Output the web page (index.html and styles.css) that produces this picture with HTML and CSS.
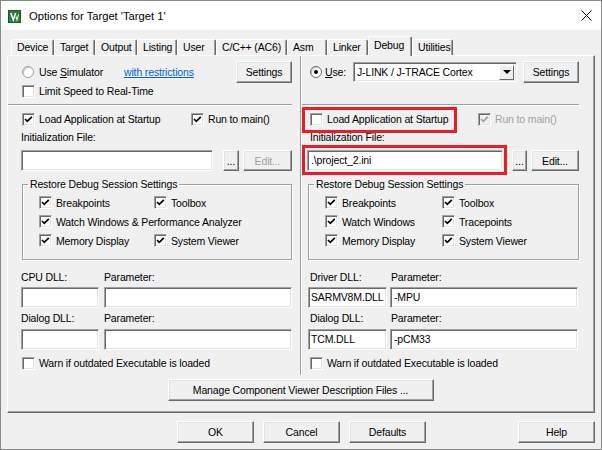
FILE: index.html
```html
<!DOCTYPE html>
<html lang="en">

<head>
    <meta charset="UTF-8">
    <title>Options for Target 'Target 1'</title>
    <link rel="stylesheet" href="styles.css">
</head>

<body>
    <div class="window">
        <div class="titlebar">
            <svg class="app-icon" width="13" height="13" viewBox="0 0 13 13">
                <rect x="0.5" y="0.5" width="12" height="12" fill="#2e7d3b" stroke="#1b5a27" />
                <path d="M2.8 3 L5.3 10 L7.6 3" stroke="#fff" stroke-width="1.5" fill="none" />
                <path d="M8 6.5 L9 10 L10.6 4.5" stroke="#d8efd2" stroke-width="1.1" fill="none" />
            </svg>
            <span class="title">Options for Target 'Target 1'</span>
            <svg class="close" width="11" height="11" viewBox="0 0 11 11">
                <path d="M0.5 0.5 L10.5 10.5 M10.5 0.5 L0.5 10.5" stroke="#000" stroke-width="1" />
            </svg>
        </div>

        <div class="tabs">
            <div class="tab t-device">Device</div>
            <div class="tab t-target">Target</div>
            <div class="tab t-output">Output</div>
            <div class="tab t-listing">Listing</div>
            <div class="tab t-user">User</div>
            <div class="tab t-cc">C/C++ (AC6)</div>
            <div class="tab t-asm">Asm</div>
            <div class="tab t-linker">Linker</div>
            <div class="tab t-debug active">Debug</div>
            <div class="tab t-util">Utilities</div>
        </div>

        <div class="panel">
            <div class="columns">
                <!-- simulator side -->
                <div class="col col-left">
                    <div class="row row-top">
                        <span class="opt sim-opt"><span class="radio"></span><span>Use <u>S</u>imulator</span></span>
                        <a class="link" href="#">with restrictions</a>
                        <button class="btn settings-btn">Settings</button>
                    </div>
                    <div class="row">
                        <span class="opt"><span class="box"></span>Limit Speed to Real-Time</span>
                    </div>
                    <div class="sep"></div>
                    <div class="row load-row">
                        <span class="opt load-opt"><span class="box"><svg width="11" height="11" viewBox="0 0 11 11"><path d="M2 5 L4.3 7.4 L8.8 2.8" stroke="#000" stroke-width="1.7" fill="none" /></svg></span>Load Application at Startup</span>
                        <span class="opt"><span class="box"><svg width="11" height="11" viewBox="0 0 11 11"><path d="M2 5 L4.3 7.4 L8.8 2.8" stroke="#000" stroke-width="1.7" fill="none" /></svg></span>Run to main()</span>
                    </div>
                    <div class="lbl">Initialization File:</div>
                    <div class="file-row">
                        <div class="field init-field"></div>
                        <button class="btn dots-btn">...</button>
                        <button class="btn edit-btn disabled">Edit...</button>
                    </div>
                    <fieldset class="group">
                        <legend>Restore Debug Session Settings</legend>
                        <div class="grp-row">
                            <span class="opt c1"><span class="box"><svg width="11" height="11" viewBox="0 0 11 11"><path d="M2 5 L4.3 7.4 L8.8 2.8" stroke="#000" stroke-width="1.7" fill="none" /></svg></span>Breakpoints</span>
                            <span class="opt"><span class="box"><svg width="11" height="11" viewBox="0 0 11 11"><path d="M2 5 L4.3 7.4 L8.8 2.8" stroke="#000" stroke-width="1.7" fill="none" /></svg></span>Toolbox</span>
                        </div>
                        <div class="grp-row">
                            <span class="opt"><span class="box"><svg width="11" height="11" viewBox="0 0 11 11"><path d="M2 5 L4.3 7.4 L8.8 2.8" stroke="#000" stroke-width="1.7" fill="none" /></svg></span>Watch Windows &amp; Performance Analyzer</span>
                        </div>
                        <div class="grp-row">
                            <span class="opt c1"><span class="box"><svg width="11" height="11" viewBox="0 0 11 11"><path d="M2 5 L4.3 7.4 L8.8 2.8" stroke="#000" stroke-width="1.7" fill="none" /></svg></span>Memory Display</span>
                            <span class="opt"><span class="box"><svg width="11" height="11" viewBox="0 0 11 11"><path d="M2 5 L4.3 7.4 L8.8 2.8" stroke="#000" stroke-width="1.7" fill="none" /></svg></span>System Viewer</span>
                        </div>
                    </fieldset>
                    <div class="lbl dll-lbl">
                        <span class="dll-name">CPU DLL:</span>
                        <span>Parameter:</span>
                    </div>
                    <div class="dll-row">
                        <div class="field dll-field"></div>
                        <div class="field param-field"></div>
                    </div>
                    <div class="lbl dll-lbl second">
                        <span class="dll-name">Dialog DLL:</span>
                        <span>Parameter:</span>
                    </div>
                    <div class="dll-row second">
                        <div class="field dll-field"></div>
                        <div class="field param-field"></div>
                    </div>
                    <div class="row warn-row">
                        <span class="opt"><span class="box"></span>Warn if outdated Executable is loaded</span>
                    </div>
                </div>

                <!-- target driver side -->
                <div class="col col-right">
                    <div class="row row-top">
                        <span class="opt use-opt"><span class="radio on"></span><span><u>U</u>se:</span></span>
                        <div class="select">
                            <span class="select-text">J-LINK / J-TRACE Cortex</span>
                            <span class="select-arrow"></span>
                        </div>
                        <button class="btn settings-btn">Settings</button>
                    </div>
                    <div class="row"></div>
                    <div class="sep"></div>
                    <div class="row load-row">
                        <span class="opt load-opt"><span class="box"></span>Load Application at Startup</span>
                        <span class="opt dim"><span class="box dim-box"><svg width="11" height="11" viewBox="0 0 11 11"><path d="M2 5 L4.3 7.4 L8.8 2.8" stroke="#a0a0a0" stroke-width="1.7" fill="none" /></svg></span>Run to main()</span>
                    </div>
                    <div class="lbl">Initialization File:</div>
                    <div class="file-row">
                        <div class="field init-field">.\project_2.ini</div>
                        <button class="btn dots-btn">...</button>
                        <button class="btn edit-btn">Edit...</button>
                    </div>
                    <fieldset class="group">
                        <legend>Restore Debug Session Settings</legend>
                        <div class="grp-row">
                            <span class="opt c1"><span class="box"><svg width="11" height="11" viewBox="0 0 11 11"><path d="M2 5 L4.3 7.4 L8.8 2.8" stroke="#000" stroke-width="1.7" fill="none" /></svg></span>Breakpoints</span>
                            <span class="opt"><span class="box"><svg width="11" height="11" viewBox="0 0 11 11"><path d="M2 5 L4.3 7.4 L8.8 2.8" stroke="#000" stroke-width="1.7" fill="none" /></svg></span>Toolbox</span>
                        </div>
                        <div class="grp-row">
                            <span class="opt c1"><span class="box"><svg width="11" height="11" viewBox="0 0 11 11"><path d="M2 5 L4.3 7.4 L8.8 2.8" stroke="#000" stroke-width="1.7" fill="none" /></svg></span>Watch Windows</span>
                            <span class="opt"><span class="box"><svg width="11" height="11" viewBox="0 0 11 11"><path d="M2 5 L4.3 7.4 L8.8 2.8" stroke="#000" stroke-width="1.7" fill="none" /></svg></span>Tracepoints</span>
                        </div>
                        <div class="grp-row">
                            <span class="opt c1"><span class="box"><svg width="11" height="11" viewBox="0 0 11 11"><path d="M2 5 L4.3 7.4 L8.8 2.8" stroke="#000" stroke-width="1.7" fill="none" /></svg></span>Memory Display</span>
                            <span class="opt"><span class="box"><svg width="11" height="11" viewBox="0 0 11 11"><path d="M2 5 L4.3 7.4 L8.8 2.8" stroke="#000" stroke-width="1.7" fill="none" /></svg></span>System Viewer</span>
                        </div>
                    </fieldset>
                    <div class="lbl dll-lbl">
                        <span class="dll-name">Driver DLL:</span>
                        <span>Parameter:</span>
                    </div>
                    <div class="dll-row">
                        <div class="field dll-field">SARMV8M.DLL</div>
                        <div class="field param-field">-MPU</div>
                    </div>
                    <div class="lbl dll-lbl second">
                        <span class="dll-name">Dialog DLL:</span>
                        <span>Parameter:</span>
                    </div>
                    <div class="dll-row second">
                        <div class="field dll-field">TCM.DLL</div>
                        <div class="field param-field">-pCM33</div>
                    </div>
                    <div class="row warn-row">
                        <span class="opt"><span class="box"></span>Warn if outdated Executable is loaded</span>
                    </div>

                    <!-- highlight marks drawn over the dialog -->
                    <div class="mark mark-load"></div>
                    <div class="mark mark-init"></div>
                </div>
            </div>

            <div class="manage-row">
                <button class="btn manage-btn">Manage Component Viewer Description Files ...</button>
            </div>
        </div>

        <div class="footer">
            <button class="btn foot-btn">OK</button>
            <button class="btn foot-btn">Cancel</button>
            <button class="btn foot-btn">Defaults</button>
            <button class="btn foot-btn help-btn">Help</button>
        </div>
    </div>
</body>

</html>
```

FILE: styles.css
```css
* {
    box-sizing: border-box;
}

body {
    margin: 0;
    padding: 0;
    font-family: "Liberation Sans", Arial, sans-serif;
    font-size: 10.5px;
    letter-spacing: -0.15px;
    color: #000;
    background-color: #fff;
}

.window {
    width: 602px;
    height: 450px;
    border: 1px solid #8a8a8a;
    background-color: #f0f0f0;
    display: flex;
    flex-direction: column;
}

/* title bar */
.titlebar {
    height: 29px;
    background-color: #fff;
    display: flex;
    align-items: center;
    padding-left: 7px;
    padding-right: 9px;
}

.app-icon {
    flex: none;
    margin-top: 2px;
}

.title {
    margin-left: 8px;
    font-size: 11.2px;
    letter-spacing: 0;
}

.close {
    margin-left: auto;
}

/* tabs */
.tabs {
    height: 25px;
    display: flex;
    align-items: flex-end;
    padding-left: 10px;
}

.tab {
    height: 16px;
    line-height: 15px;
    padding-left: 5px;
    background-color: #f0f0f0;
    border-top: 1px solid #fff;
    border-left: 1px solid #fff;
    border-right: 1px solid #696969;
    box-shadow: inset -1px 0 0 #a0a0a0;
    border-radius: 2px 2px 0 0;
    white-space: nowrap;
}

.tab.active {
    height: 20px;
    line-height: 17px;
    margin-bottom: -1px;
    position: relative;
    z-index: 1;
}

.t-device { width: 43px; }
.t-target { width: 41px; }
.t-output { width: 42px; }
.t-listing { width: 40px; }
.t-user { width: 39px; }
.t-cc { width: 71px; }
.t-asm { width: 40px; }
.t-linker { width: 41px; }
.t-debug { width: 44px; }
.t-util { width: 41px; }

/* tab page */
.panel {
    margin: 0 6px 0 6px;
    height: 358px;
    border: 1px solid;
    border-color: #fff #696969 #696969 #fff;
    box-shadow: inset -1px -1px 0 #a0a0a0;
    padding-bottom: 11px;
}

.columns {
    display: flex;
    height: 319px;
}

.col {
    padding-top: 5px;
    height: 100%;
}

.col-left {
    width: 293px;
    padding-left: 13px;
    padding-right: 8px;
    border-right: 1px solid #a0a0a0;
}

.col-right {
    flex: 1;
    padding-left: 6px;
    padding-right: 15px;
    border-left: 1px solid #fff;
    position: relative;
}

.row {
    height: 16px;
    display: flex;
    align-items: center;
}

.row-top {
    height: 22px;
}

.col-left .row {
    padding-left: 1px;
}

.col-right .row {
    padding-left: 2px;
}

.opt {
    display: flex;
    align-items: center;
    gap: 4px;
    white-space: nowrap;
}

.box {
    width: 13px;
    height: 13px;
    flex: none;
    background-color: #fff;
    border: 1px solid;
    border-color: #a0a0a0 #fff #fff #a0a0a0;
    box-shadow: inset 1px 1px 0 #696969, inset -1px -1px 0 #e3e3e3;
    display: flex;
    align-items: center;
    justify-content: center;
}

.dim-box {
    background-color: #f0f0f0;
}

.dim {
    color: #a0a0a0;
}

.radio {
    width: 12px;
    height: 12px;
    flex: none;
    border-radius: 50%;
    background-color: #fff;
    border: 1px solid #a0a0a0;
    box-shadow: inset 1px 1px 0 #c8c8c8;
    display: flex;
    align-items: center;
    justify-content: center;
}

.radio.on {
    border-color: #696969;
}

.radio.on::after {
    content: "";
    width: 4px;
    height: 4px;
    border-radius: 50%;
    background-color: #000;
}

.sim-opt {
    width: 102px;
    gap: 5px;
}

.use-opt {
    width: 43px;
    gap: 3px;
}

.link {
    color: #0066cc;
    text-decoration: underline;
}

.btn {
    font-family: inherit;
    font-size: inherit;
    letter-spacing: inherit;
    color: #000;
    height: 22px;
    padding: 0;
    background-color: #f0f0f0;
    border: 1px solid;
    border-color: #fff #696969 #696969 #fff;
    box-shadow: inset -1px -1px 0 #a0a0a0, inset 1px 1px 0 #e3e3e3;
    border-radius: 0;
    cursor: pointer;
}

.btn.disabled {
    color: #a0a0a0;
}

.settings-btn {
    width: 56px;
    margin-left: auto;
}

.col-right .settings-btn {
    margin-left: 6px;
}

.select {
    width: 164px;
    height: 20px;
    background-color: #fff;
    border: 1px solid;
    border-color: #a0a0a0 #fff #fff #a0a0a0;
    box-shadow: inset 1px 1px 0 #696969, inset -1px -1px 0 #e3e3e3;
    display: flex;
    align-items: center;
    padding: 2px 2px 2px 3px;
}

.select-text {
    flex: 1;
    white-space: nowrap;
}

.select-arrow {
    width: 15px;
    height: 15px;
    background-color: #f0f0f0;
    border: 1px solid;
    border-color: #fff #696969 #696969 #fff;
    display: flex;
    align-items: center;
    justify-content: center;
}

.select-arrow::after {
    content: "";
    border-left: 4px solid transparent;
    border-right: 4px solid transparent;
    border-top: 4px solid #000;
}

.sep {
    margin-top: 5px;
    height: 2px;
    border-top: 1px solid #a0a0a0;
    border-bottom: 1px solid #fff;
}

.col-left .sep {
    margin-left: -13px;
}

.col-right .sep {
    margin-left: -6px;
}

.load-row {
    margin-top: 5px;
}

.col-left .load-opt {
    width: 169px;
}

.col-right .load-opt {
    width: 168px;
}

.lbl {
    height: 16px;
    line-height: 16px;
    margin-top: 2px;
    white-space: nowrap;
}

.col-right .lbl {
    padding-left: 2px;
}

.field {
    height: 21px;
    line-height: 19px;
    background-color: #fff;
    border: 1px solid;
    border-color: #a0a0a0 #fff #fff #a0a0a0;
    box-shadow: inset 1px 1px 0 #696969, inset -1px -1px 0 #e3e3e3;
    padding-left: 3px;
    white-space: nowrap;
    overflow: hidden;
}

.file-row {
    margin-top: 5px;
    display: flex;
    height: 21px;
}

.file-row .btn {
    height: 21px;
}

.col-left .init-field {
    width: 192px;
}

.col-left .dots-btn {
    width: 16px;
    margin-left: 10px;
}

.col-left .edit-btn {
    width: 49px;
    margin-left: 4px;
}

.col-right .init-field {
    width: 196px;
    margin-left: -1px;
}

.col-right .dots-btn {
    width: 15px;
    margin-left: 9px;
}

.col-right .edit-btn {
    width: 48px;
    margin-left: 4px;
}

/* restore settings group */
.group {
    margin: 7px 0 0 1px;
    padding: 3px 0 9px 5px;
    border: 1px solid #a0a0a0;
    box-shadow: inset 1px 1px 0 #fff, 1px 1px 0 #fff;
    min-width: 0;
}

.col-left .group {
    width: 270px;
}

.col-right .group {
    width: 271px;
    margin-left: 0;
}

.group legend {
    padding: 0 2px;
    line-height: 12px;
    height: 12px;
}

.grp-row {
    height: 19px;
    display: flex;
    align-items: center;
    padding-left: 11px;
}

.col-left .c1 {
    width: 115px;
}

.col-right .c1 {
    width: 117px;
}

.dll-lbl {
    margin-top: 9px;
    display: flex;
}

.dll-lbl.second {
    margin-top: 2px;
}

.col-left .dll-name {
    width: 83px;
}

.col-right .dll-name {
    width: 81px;
}

.dll-row {
    margin-top: 2px;
    display: flex;
}

.dll-row.second {
    margin-top: 3px;
}

.col-left .dll-field {
    width: 78px;
}

.col-left .param-field {
    width: 188px;
    margin-left: 5px;
}

.col-right .dll-field {
    width: 79px;
    padding-left: 2px;
}

.col-right .param-field {
    width: 188px;
    margin-left: 3px;
}

.warn-row {
    margin-top: 5px;
}

/* red highlight marks */
.mark {
    position: absolute;
    border: 3px solid #ec1c24;
}

.mark-load {
    left: 0;
    top: 51px;
    width: 155px;
    height: 26px;
}

.mark-init {
    left: 0;
    top: 89px;
    width: 205px;
    height: 30px;
}

.manage-row {
    margin-top: 4px;
    display: flex;
    justify-content: center;
}

.manage-btn {
    width: 266px;
    margin-left: -1px;
}

/* bottom buttons */
.footer {
    display: flex;
    padding-top: 8px;
    padding-left: 176px;
    padding-right: 6px;
    gap: 9px;
}

.foot-btn {
    width: 77px;
    height: 22px;
}

.help-btn {
    margin-left: auto;
}
```
